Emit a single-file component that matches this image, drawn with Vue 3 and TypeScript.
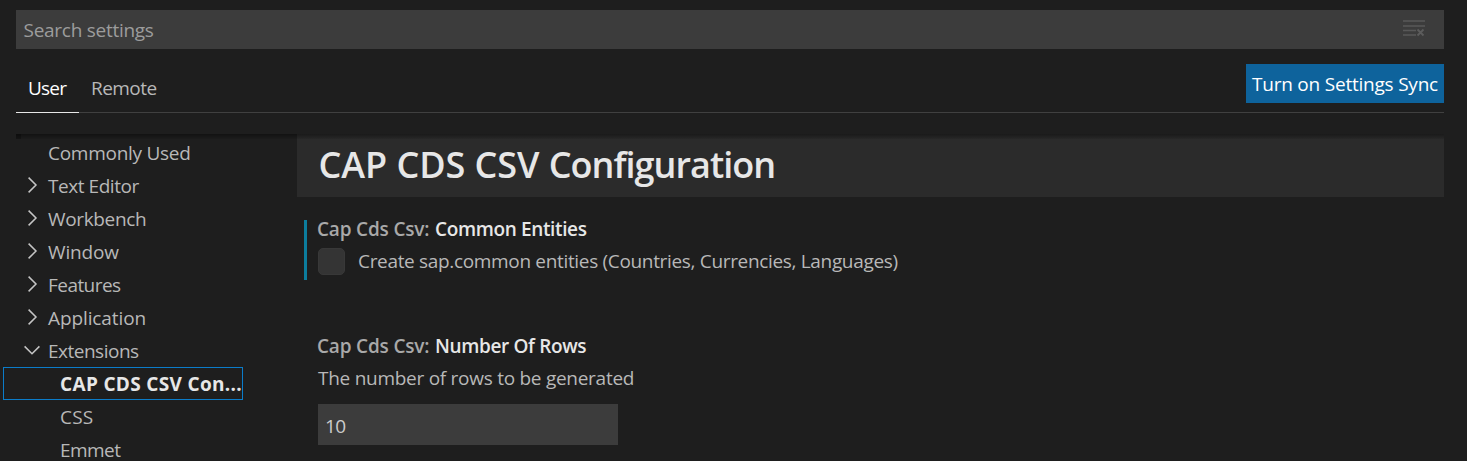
<script setup lang="ts">
interface TocEntry {
  label: string
  state?: 'closed' | 'open'
  child?: boolean
  selected?: boolean
  cls: string
}

const toc: TocEntry[] = [
  { label: 'Commonly Used', cls: 't-common' },
  { label: 'Text Editor', state: 'closed', cls: 't-editor' },
  { label: 'Workbench', state: 'closed', cls: 't-workbench' },
  { label: 'Window', state: 'closed', cls: 't-window' },
  { label: 'Features', state: 'closed', cls: 't-features' },
  { label: 'Application', state: 'closed', cls: 't-application' },
  { label: 'Extensions', state: 'open', cls: 't-extensions' },
  { label: 'CAP CDS CSV Con...', child: true, selected: true, cls: 't-cap' },
  { label: 'CSS', child: true, cls: 't-css' },
  { label: 'Emmet', child: true, cls: 't-emmet' },
]
</script>

<template>
  <div class="settings">
    <div class="search">
      <span class="placeholder">Search settings</span>
      <svg class="clear" width="24" height="18" viewBox="0 0 24 18">
        <path d="M1 2H23M1 7H23M1 11.5H14M1 16H14" stroke="#585858" stroke-width="1.6" fill="none" />
        <path d="M15.5 10.5L21.5 16.5M21.5 10.5L15.5 16.5" stroke="#5c5c5c" stroke-width="1.8" fill="none" />
      </svg>
    </div>

    <div class="tabs">
      <div class="tab active"><span class="t-user">User</span></div>
      <div class="tab"><span class="t-remote">Remote</span></div>
      <button class="sync">Turn on Settings Sync</button>
    </div>

    <div class="body">
      <div class="shadow"><i></i></div>
      <nav class="toc">
        <div
          v-for="entry in toc"
          :key="entry.label"
          class="row"
          :class="{ child: entry.child, selected: entry.selected }"
        >
          <span class="twisty">
            <svg v-if="entry.state === 'closed'" width="24" height="24" viewBox="0 0 24 24">
              <path d="M8.6 4.6L16 12L8.6 19.4" />
            </svg>
            <svg v-else-if="entry.state === 'open'" width="24" height="24" viewBox="0 0 24 24">
              <path d="M4.6 8.4L12 15.8L19.4 8.4" />
            </svg>
          </span>
          <span class="label" :class="entry.cls">{{ entry.label }}</span>
        </div>
      </nav>

      <main class="content">
        <h1 class="title"><span class="caps">CAP CDS CSV </span>Configuration</h1>

        <section class="item modified">
          <h2><span class="cat">Cap Cds Csv:</span><span class="name">Common Entities</span></h2>
          <div class="check">
            <span class="box"></span>
            <span class="t-create">Create sap.common entities (Countries, Currencies, Languages)</span>
          </div>
        </section>

        <section class="item">
          <h2><span class="cat">Cap Cds Csv:</span><span class="name">Number Of Rows</span></h2>
          <p class="desc">The number of rows to be generated</p>
          <div class="field">10</div>
        </section>
      </main>
    </div>
  </div>
</template>

<style>
body {
  background: #1e1e1e;
  overflow: hidden;
}
</style>

<style scoped>
.settings {
  box-sizing: border-box;
  width: 1467px;
  height: 461px;
  padding: 10px 23px 0 16px;
  overflow: hidden;
  background: #1e1e1e;
  color: #b8b8b8;
  font-family: "Open Sans", "Noto Sans", sans-serif;
  font-size: 19px;
  line-height: 26px;
  letter-spacing: -0.55px;
  white-space: nowrap;
}
.search {
  display: flex;
  align-items: center;
  justify-content: space-between;
  height: 39px;
  padding: 0 18px 0 7.5px;
  background: #3c3c3c;
  color: #9c9c9c;
  letter-spacing: -0.27px;
}
.clear {
  margin-top: -3px;
}
.tabs {
  display: flex;
  align-items: flex-start;
  box-sizing: border-box;
  height: 49px;
  margin-top: 15px;
  border-bottom: 1px solid #404040;
}
.tab {
  box-sizing: border-box;
  width: 63px;
  height: 49px;
  padding: 11px 0 0 12px;
}
.tab.active {
  border-bottom: 1px solid #e7e7e7;
  color: #fff;
}
.t-user {
  letter-spacing: -0.8px;
}
.sync {
  box-sizing: border-box;
  width: 198px;
  height: 39px;
  margin: 0 0 0 auto;
  padding: 0 0 0 6px;
  border: 0;
  background: #0e639c;
  color: #fff;
  font: inherit;
  letter-spacing: -0.22px;
  text-align: left;
}
.body {
  position: relative;
  display: flex;
  height: 327px;
  margin-top: 21px;
}
.shadow {
  position: absolute;
  z-index: 2;
  top: 0;
  left: 0;
  right: 0;
  height: 5px;
  background: linear-gradient(rgba(0, 0, 0, 0.4), rgba(0, 0, 0, 0.08));
}
.shadow i {
  display: block;
  width: 5px;
  height: 5px;
  background: rgba(0, 0, 0, 0.25);
}
.toc {
  width: 240px;
  margin: 2px 54px 0 -13px;
}
.row {
  display: flex;
  align-items: center;
  box-sizing: border-box;
  height: 33px;
  padding-left: 18px;
  border: 1px solid transparent;
}
.row.child {
  padding-left: 30px;
}
.row.selected {
  border-color: #0b7cc9;
  color: #e7e7e7;
  font-weight: 700;
}
.twisty {
  flex: none;
  width: 24px;
  height: 24px;
  margin: -1px 4px 0 -2px;
}
.twisty svg {
  display: block;
}
.twisty path {
  fill: none;
  stroke: #c5c5c5;
  stroke-width: 1.5;
}
.t-common {
  letter-spacing: -0.27px;
}
.t-editor {
  letter-spacing: -0.45px;
}
.t-workbench {
  letter-spacing: -0.35px;
}
.t-window {
  letter-spacing: -0.15px;
}
.t-application {
  letter-spacing: -0.1px;
}
.t-extensions {
  letter-spacing: -0.5px;
}
.t-cap {
  letter-spacing: 0.33px;
}
.t-css {
  letter-spacing: 0.2px;
}
.content {
  flex: 1;
}
.title {
  box-sizing: border-box;
  height: 63px;
  margin: 0;
  padding: 6px 0 0 21.5px;
  background: #2b2b2b;
  color: #e7e7e7;
  font-size: 36px;
  font-weight: 600;
  line-height: 49px;
  letter-spacing: -0.98px;
}
.caps {
  letter-spacing: -0.05px;
}
.item {
  box-sizing: border-box;
  height: 60px;
  margin: 23px 0 57px 7px;
  padding-left: 11px;
  border-left: 3px solid transparent;
}
.item.modified {
  border-left-color: #0c7d9d;
}
h2 {
  display: flex;
  height: 26px;
  margin: 0;
  color: #e7e7e7;
  font-size: 19px;
  font-weight: 600;
  line-height: 18px;
}
.cat {
  width: 118px;
  margin-left: -1px;
  color: #a9a9a9;
  letter-spacing: -0.18px;
}
.name {
  letter-spacing: -0.36px;
}
.check {
  display: flex;
  align-items: center;
  gap: 13px;
  height: 31px;
}
.t-create {
  margin-top: -2px;
  letter-spacing: -0.33px;
}
.box {
  box-sizing: border-box;
  width: 27px;
  height: 27px;
  border: 1px solid #383838;
  border-radius: 5px;
  background: #343434;
}
.desc {
  margin: 2px 0 13px;
  letter-spacing: -0.27px;
}
.field {
  box-sizing: border-box;
  width: 300px;
  height: 41px;
  padding-left: 7px;
  background: #3c3c3c;
  color: #cccccc;
  line-height: 44px;
}
</style>
